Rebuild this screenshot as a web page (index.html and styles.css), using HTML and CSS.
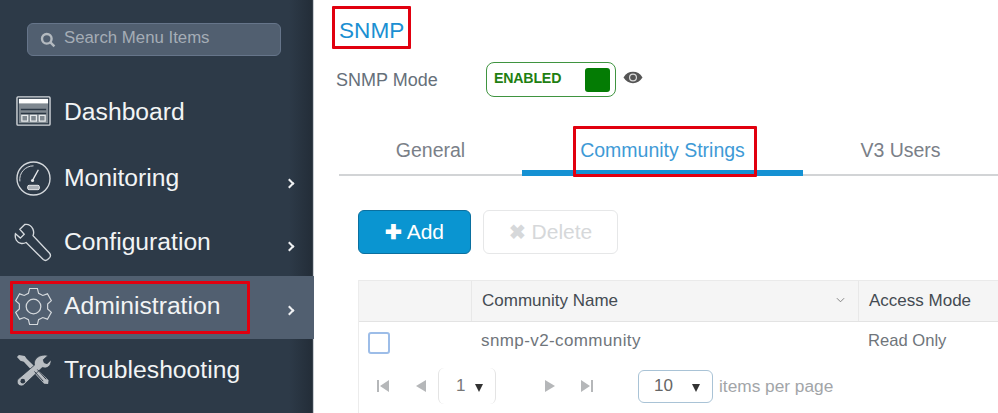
FILE: index.html
```html
<!DOCTYPE html>
<html lang="en">
<head>
  <meta charset="UTF-8" />
  <title>SNMP</title>
  <link rel="stylesheet" href="styles.css">
</head>
<body>

  <aside class="sidebar">
    <div class="search">
      <svg class="search-icon" viewBox="0 0 16 16"><circle cx="6.8" cy="6.8" r="4.8"/><path d="M10.4 10.4 14.4 14.4"/></svg>
      <span>Search Menu Items</span>
    </div>

    <nav class="menu">
      <div class="item item-dashboard">
        <svg class="icon" viewBox="0 0 36 32">
          <rect x="1" y="1" width="34" height="29" rx="1" fill="none" stroke="#d5d9dd" stroke-width="1.4"/>
          <rect x="3" y="3" width="30" height="5" fill="#fff" stroke="none"/>
          <rect x="3" y="8" width="30" height="20" fill="#7f8890" stroke="none"/>
          <path d="M5 14H31M5 18H31" stroke="#2b3744" stroke-width="1.6"/>
          <path d="M6 20h6v6H6zM15 20h6v6h-6zM24 20h6v6h-6z" fill="none" stroke="#e8eaec" stroke-width="1.3"/>
        </svg>
        <span>Dashboard</span>
      </div>
      <div class="item item-monitoring">
        <svg class="icon" viewBox="0 0 36 36">
          <circle cx="18" cy="18" r="17" fill="none" stroke="#d5d9dd" stroke-width="1.4"/>
          <path d="M4 21A14 14 0 0 1 18 5" fill="none" stroke="#d5d9dd" stroke-width="1"/>
          <path d="M17 20 23 9" stroke="#e8eaec" stroke-width="1.4"/>
          <circle cx="17" cy="20" r="1.6" fill="#e8eaec" stroke="none"/>
          <rect x="12" y="25" width="12" height="4.5" rx="1.5" fill="#aab0b6" stroke="#e8eaec"/>
        </svg>
        <span>Monitoring</span>
        <b class="chev"></b>
      </div>
      <div class="item item-config">
        <svg class="icon icon-wide" viewBox="0 0 40 40">
          <path d="M11 1.500 6 6.500l4.500 5-4 4-5-4.500C.5 16 3 20.500 7.500 21c2 .2 3.500-.2 5-1L30 37.500c1.500 1.200 3 1.200 4.500 0l2-2c1.200-1.500 1.200-3 0-4.500L19.500 13c.8-2 1-4.500-.2-7C17.500 2.500 14 1 11 1.500Z" fill="none" stroke="#d5d9dd" stroke-width="1.400"/>
        </svg>
        <span>Configuration</span>
        <b class="chev"></b>
      </div>
      <div class="item item-admin active">
        <svg class="icon icon-wide" viewBox="0 0 40 40">
          <path d="M16 1.500h8l1.200 5 4.300 2.200 4.800-1.700 4 7-3.800 3.400v5.200l3.800 3.400-4 7-4.800-1.700-4.300 2.200-1.200 5h-8l-1.200-5-4.300-2.200-4.800 1.700-4-7 3.800-3.400v-5.200L1.700 14l4-7 4.800 1.700 4.300-2.200Z" fill="none" stroke="#d5d9dd" stroke-width="1.200"/>
          <circle cx="20" cy="20" r="7.500" fill="none" stroke="#d5d9dd" stroke-width="1.300"/>
        </svg>
        <span>Administration</span>
        <b class="chev"></b>
        <div class="mark mark-admin"></div>
      </div>
      <div class="item item-trouble">
        <svg class="icon" viewBox="0 0 36 36">
          <path d="M3 2 1 4l3.500 4L8 9l21 22.500 4 .5.500-4L11 6 9 3Z" fill="#b9bec3" stroke="none"/>
          <path d="M33 2.500l-5 4.500 1 3 3 1 4-4c.5 4-1.500 8-6 8.500l-3-.5L9 32c-3 4.500-10 .5-7-5l17-14.500c-1.500-6 5-12 14-10Z" fill="#b9bec3" stroke="#2b3744" stroke-width=".8"/>
          <circle cx="7" cy="29" r="2.400" fill="#2b3744" stroke="none"/>
          <path d="M19 19l9 10M22 17l9 10" stroke="#2b3744" stroke-width="1"/>
        </svg>
        <span>Troubleshooting</span>
      </div>
    </nav>
  </aside>

  <main class="content">
    <h1 class="title">SNMP</h1>

    <div class="mode-row">
      <label>SNMP Mode</label>
      <div class="toggle">
        <span>ENABLED</span>
        <i class="knob"></i>
      </div>
      <svg class="eye" viewBox="0 0 20 13">
        <path d="M.5 6.500C3 2.500 6 .8 10 .8s7 1.700 9.500 5.700C17 10.500 14 12.200 10 12.200S3 10.500.5 6.500Z" fill="#555"/>
        <circle cx="10" cy="6.500" r="4" fill="#ddd"/>
        <circle cx="10" cy="6.500" r="2.800" fill="#555"/>
      </svg>
    </div>

    <div class="tabs">
      <div class="tab tab-general">General</div>
      <div class="tab tab-community on">Community Strings</div>
      <div class="tab tab-users">V3 Users</div>
      <div class="mark mark-tab"></div>
    </div>

    <div class="actions">
      <button class="btn btn-add"><b>✚</b> Add</button>
      <button class="btn btn-delete"><b>✖</b> Delete</button>
    </div>

    <div class="grid">
      <div class="grid-head">
        <div class="cell cell-check"></div>
        <div class="cell cell-name">Community Name <svg class="sort" viewBox="0 0 10 6"><path d="M1 1 5 5 9 1"/></svg></div>
        <div class="cell cell-mode">Access Mode</div>
      </div>
      <div class="grid-row">
        <div class="cell cell-check"><i class="checkbox"></i></div>
        <div class="cell cell-name">snmp-v2-community</div>
        <div class="cell cell-mode">Read Only</div>
      </div>
      <div class="pager">
        <svg class="pg pg-first" viewBox="0 0 14 14"><path d="M1 1h2v12H1zM13 1v12L4 7z"/></svg>
        <svg class="pg pg-prev" viewBox="0 0 14 14"><path d="M12 1v12L2 7z"/></svg>
        <div class="page-num"><span>1</span><i class="caret"></i></div>
        <svg class="pg pg-next" viewBox="0 0 14 14"><path d="M2 1v12l10-6z"/></svg>
        <svg class="pg pg-last" viewBox="0 0 14 14"><path d="M1 1v12l9-6zM11 1h2v12h-2z"/></svg>
        <div class="per-page"><span>10</span><i class="caret"></i></div>
        <span class="per-label">items per page</span>
      </div>
    </div>
  </main>

</body>
</html>
```

FILE: styles.css
```css
* {
  box-sizing: border-box;
}

body {
  margin: 0;
  display: flex;
  height: 413px;
  overflow: hidden;
  font-family: "Liberation Sans", Arial, sans-serif;
  background: #fff;
}

/* sidebar */
.sidebar {
  width: 314px;
  flex-shrink: 0;
  padding-top: 23px;
  background: linear-gradient(to right, #2d3a48 0, #2d3a48 92%, #232d38 99.500%, #c9ced3 99.700%);
}

.search {
  display: flex;
  align-items: center;
  gap: 8px;
  width: 254px;
  height: 33px;
  margin-left: 27px;
  padding-left: 12px;
  background: #515f70;
  border: 1px solid #66758a;
  border-radius: 6px;
  color: #a5adb6;
  font-size: 16.800px;
}

.search span {
  margin-bottom: 4px;
}

.search-icon {
  width: 16px;
  height: 16px;
  fill: none;
  stroke: #b4bac0;
  stroke-width: 2.400;
}

.menu {
  margin-top: 24px;
}

.item {
  position: relative;
  display: flex;
  align-items: center;
  padding-left: 16px;
  color: #f2f4f5;
  font-size: 24.700px;
}

.item span {
  position: absolute;
  left: 64px;
}

.item-dashboard {
  height: 63px;
}

.item-monitoring {
  height: 70px;
}

.item-config {
  height: 63px;
  padding-bottom: 5px;
}

.item-admin {
  height: 63px;
  padding-bottom: 3px;
}

.item-trouble {
  height: 62px;
}

.item.active {
  background: #515f70;
}

.icon {
  width: 35px;
  height: 35px;
}

.icon-wide {
  width: 39px;
  height: 39px;
  margin-left: -2px;
}

.chev {
  position: absolute;
  right: 21px;
  top: 50%;
  width: 7px;
  height: 7px;
  border-top: 2px solid #eef0f2;
  border-right: 2px solid #eef0f2;
  transform: rotate(45deg);
}

.item-monitoring .chev {
  margin-top: 1.500px;
}

.item-config .chev {
  margin-top: -2px;
}

.item-admin .chev {
  margin-top: -1px;
}

/* red callouts drawn over the screen */
.mark {
  position: absolute;
  border: 3px solid #e1000f;
  border-radius: 1px;
  pointer-events: none;
}

.mark-admin {
  left: 10px;
  top: 5px;
  width: 240px;
  height: 53px;
}

.mark-tab {
  left: 234px;
  top: 0;
  width: 184px;
  height: 51px;
}

/* main */
.content {
  flex: 1;
  min-width: 0;
  padding: 6px 0 0 18px;
}

.title {
  display: inline-block;
  margin: 0;
  padding: 0 4px;
  height: 43px;
  border: 3px solid #e1000f;
  border-radius: 1px;
  color: #1b8fd2;
  font-size: 22.600px;
  font-weight: normal;
  line-height: 44px;
}

.mode-row {
  display: flex;
  align-items: center;
  height: 35px;
  margin-top: 13px;
  margin-left: 4px;
  color: #66707a;
  font-size: 18px;
}

.mode-row label {
  width: 150px;
  padding-top: 2px;
}

.toggle {
  display: flex;
  align-items: center;
  justify-content: space-between;
  width: 130px;
  height: 35px;
  padding: 0 5px 0 7px;
  border: 1.500px solid #3f9440;
  border-radius: 8px;
  color: #1f7f12;
  font-size: 14.200px;
  font-weight: bold;
  letter-spacing: -.2px;
}

.toggle span {
  margin-top: -4px;
}

.knob {
  width: 25px;
  height: 24px;
  background: #047c04;
  border-radius: 3px;
}

.eye {
  width: 20px;
  height: 13px;
  margin-left: 7px;
  margin-top: -4px;
}

.tabs {
  position: relative;
  display: flex;
  height: 50px;
  margin-top: 29px;
  margin-left: 7px;
  border-bottom: 2px solid #d2d4d6;
  font-size: 19.500px;
  color: #7a8088;
  text-align: center;
  line-height: 48px;
}

.tab-general {
  width: 183px;
}

.tab-community {
  width: 281px;
}

.tab-users {
  flex: 1;
}

.tab.on {
  height: 50px;
  color: #3e9ad6;
  border-bottom: 6px solid #1591d3;
  border-radius: 3px 3px 0 0;
}

.actions {
  display: flex;
  gap: 12px;
  margin-top: 34px;
  margin-left: 26px;
}

.btn {
  height: 44px;
  border-radius: 6px;
  font-family: inherit;
  font-size: 21px;
}

.btn b {
  font-size: 20px;
}

.btn-add {
  width: 113px;
  background: #0a95d1;
  border: 1px solid #0a6f9f;
  color: #fff;
}

.btn-delete {
  width: 135px;
  background: #fff;
  border: 1.500px solid #e6e7e8;
  color: #d6d8da;
}

.grid {
  height: 140px;
  margin-top: 26px;
  margin-left: 26px;
  border-left: 1px solid #ececec;
  font-size: 17px;
  color: #6f757b;
}

.grid-head {
  display: flex;
  height: 42px;
  background: #f5f5f5;
  border-top: 1px solid #eaeaea;
  border-bottom: 1.500px solid #e3e3e3;
  color: #444b52;
}

.grid-row {
  display: flex;
  height: 39px;
}

.cell {
  display: flex;
  align-items: center;
  padding-left: 10px;
}

.cell-check {
  width: 113px;
}

.cell-name {
  position: relative;
  width: 387px;
}

.cell-mode {
  flex: 1;
}

.grid-head .cell-check, .grid-head .cell-name {
  border-right: 1px solid #e8e8e8;
}

.grid-row .cell {
  padding-left: 9px;
  padding-bottom: 2px;
}

.grid-row .cell-name {
  letter-spacing: .4px;
}

.grid-row .cell-mode {
  font-size: 16.600px;
}

.grid-row .cell-check {
  padding-top: 4px;
  padding-bottom: 1px;
}

.sort {
  position: absolute;
  right: 13px;
  top: 16px;
  width: 9px;
  height: 6px;
  fill: none;
  stroke: #777;
}

.checkbox {
  width: 22px;
  height: 22px;
  background: #fff;
  border: 2px solid #9dbde8;
  border-radius: 3px;
}

.pager {
  display: flex;
  align-items: center;
  height: 38px;
  padding-left: 17px;
  margin-top: 6px;
}

.pg {
  width: 14px;
  height: 14px;
  fill: #b5b7b9;
}

.pg-prev {
  margin-left: 24px;
}

.page-num {
  display: flex;
  align-items: center;
  width: 58px;
  height: 36px;
  margin-left: 10px;
  padding-left: 17px;
  border-left: 1.500px solid #e4e4e4;
  border-right: 1.500px solid #e4e4e4;
  border-radius: 6px;
  color: #777;
}

.page-num .caret {
  margin-left: 10px;
}

.caret {
  width: 0;
  height: 0;
  margin-top: 4px;
  border-left: 4.500px solid transparent;
  border-right: 4.500px solid transparent;
  border-top: 8px solid #333;
}

.pg-next {
  margin-left: 47px;
}

.pg-last {
  margin-left: 23px;
}

.per-page {
  display: flex;
  align-items: center;
  width: 75px;
  height: 33px;
  margin-left: 44px;
  padding-left: 15px;
  border: 1px solid #a9c3d6;
  border-radius: 6px;
  color: #666;
  font-size: 17px;
}

.per-page .caret {
  margin-left: 19px;
}

.per-label {
  margin-left: 6px;
  color: #a2a5a8;
  font-size: 17.300px;
}
```
